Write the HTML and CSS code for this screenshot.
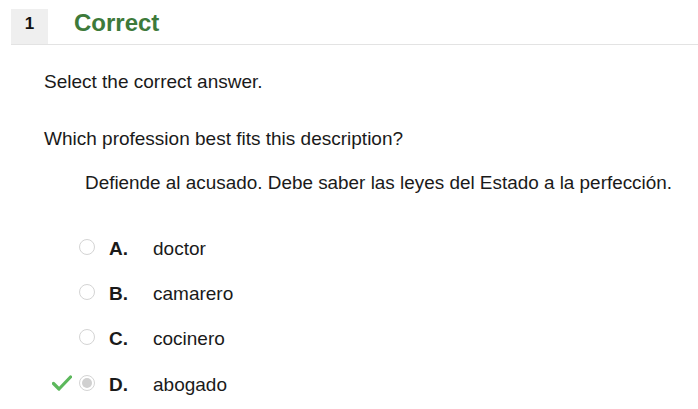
FILE: index.html
```html
<!DOCTYPE html>
<html lang="es">
<head>
<meta charset="utf-8">
<link rel="stylesheet" href="styles.css">
</head>
<body>
<div class="question">
  <div class="q-header">
    <div class="q-num">1</div>
    <div class="q-status">Correct</div>
  </div>
  <div class="q-body">
    <p class="instr">Select the correct answer.</p>
    <p class="prompt">Which profession best fits this description?</p>
    <p class="desc">Defiende al acusado. Debe saber las leyes del Estado a la perfección.</p>
    <ul class="options">
      <li class="opt"><span class="mark"></span><span class="radio"></span><span class="letter">A.</span><span class="text">doctor</span></li>
      <li class="opt"><span class="mark"></span><span class="radio"></span><span class="letter">B.</span><span class="text">camarero</span></li>
      <li class="opt"><span class="mark"></span><span class="radio"></span><span class="letter">C.</span><span class="text">cocinero</span></li>
      <li class="opt"><span class="mark"><svg width="20" height="16" viewBox="0 0 20 16"><path d="M1.5 8.5 L7 14 L18.5 2" fill="none" stroke="#5cb85c" stroke-width="3.2" stroke-linecap="round" stroke-linejoin="round"/></svg></span><span class="radio checked"></span><span class="letter">D.</span><span class="text">abogado</span></li>
    </ul>
  </div>
</div>
</body>
</html>
```
FILE: styles.css
```css
html, body {
  margin: 0;
  padding: 0;
  background: #fff;
}
body {
  font-family: "Liberation Sans", Arial, sans-serif;
  color: #1a1a1a;
  width: 698px;
  height: 409px;
  overflow: hidden;
}
.question {
  padding: 9px 0 0 11px;
}
.q-header {
  display: flex;
  align-items: center;
  border-bottom: 1px solid #e3e3e3;
}
.q-num {
  box-sizing: border-box;
  width: 37px;
  height: 35px;
  padding-bottom: 5px;
  background: #efefef;
  display: flex;
  align-items: center;
  justify-content: center;
  font-weight: bold;
  font-size: 17px;
  color: #111;
}
.q-status {
  margin-left: 26px;
  margin-bottom: 7px;
  font-size: 24px;
  font-weight: bold;
  color: #3d7a3a;
}
.q-body {
  padding-left: 33px;
}
.instr {
  margin: 26px 0 0;
  font-size: 19px;
  line-height: 22px;
}
.prompt {
  margin: 35px 0 0;
  font-size: 19px;
  line-height: 22px;
}
.desc {
  margin: 22px 0 0 41px;
  font-size: 18.9px;
  line-height: 22px;
}
.options {
  list-style: none;
  margin: 32px 0 0;
  padding: 0;
}
.opt {
  display: flex;
  align-items: center;
  height: 45.4px;
  font-size: 19px;
}
.mark {
  width: 20px;
  height: 16px;
  margin-left: 8px;
  margin-top: -4px;
  display: flex;
}
.radio {
  box-sizing: border-box;
  width: 16px;
  height: 16px;
  border-radius: 50%;
  border: 1px solid #d4d4d4;
  background: #fff;
  margin-left: 7px;
  margin-top: -4px;
  display: flex;
  align-items: center;
  justify-content: center;
}
.radio.checked::after {
  content: "";
  width: 10px;
  height: 10px;
  border-radius: 50%;
  background: #d0d0d0;
}
.letter {
  font-weight: bold;
  margin-left: 14px;
  width: 44px;
}
.text {
  color: #1a1a1a;
}
```
